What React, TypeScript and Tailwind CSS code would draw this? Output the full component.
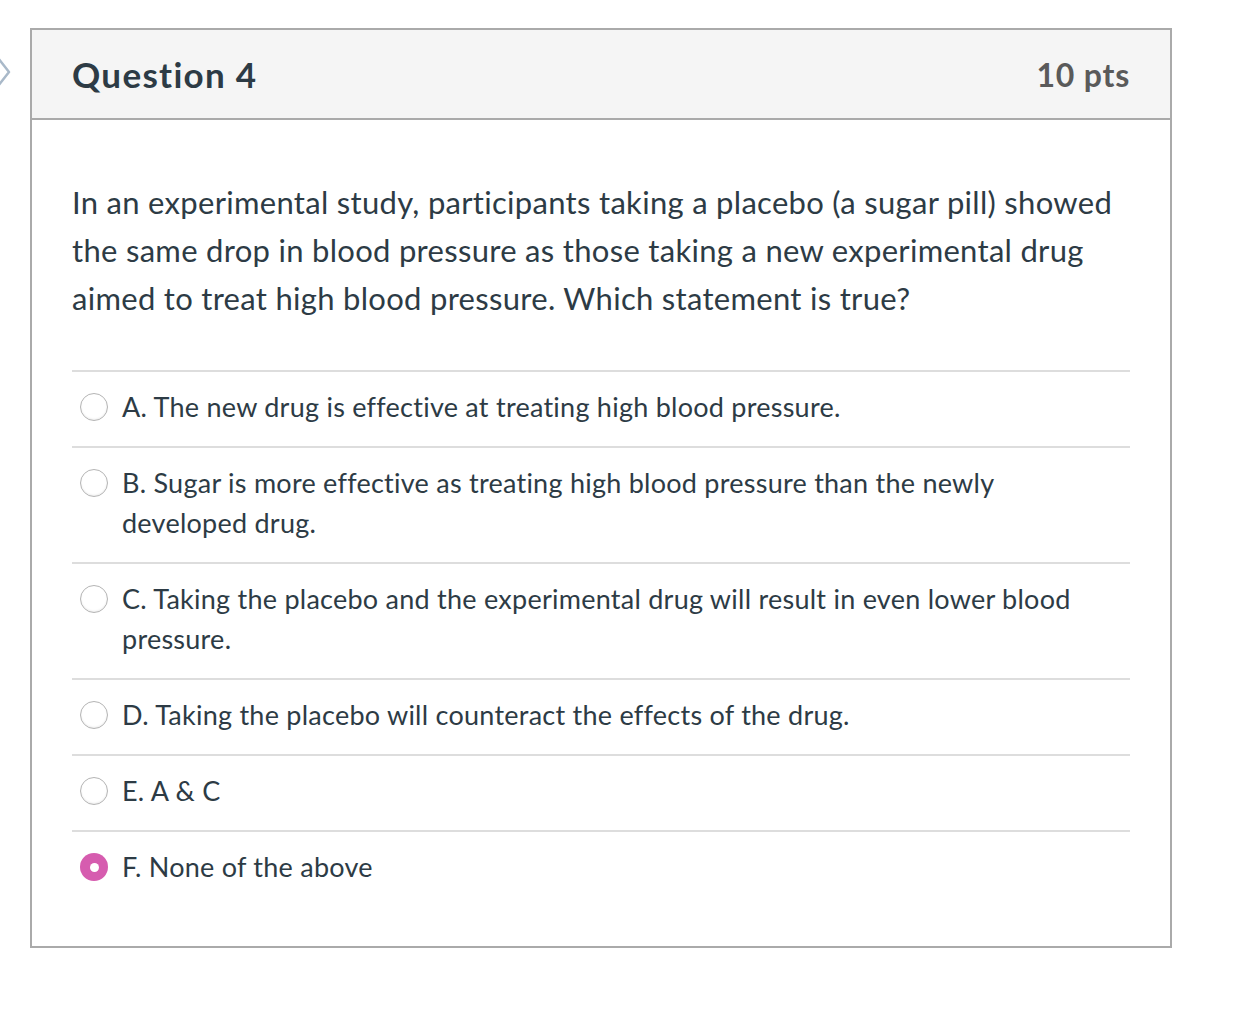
import React, { useState } from 'react';

const answers = [
  { id: 'a', text: 'A. The new drug is effective at treating high blood pressure.' },
  { id: 'b', text: 'B. Sugar is more effective as treating high blood pressure than the newly developed drug.' },
  { id: 'c', text: 'C. Taking the placebo and the experimental drug will result in even lower blood pressure.' },
  { id: 'd', text: 'D. Taking the placebo will counteract the effects of the drug.' },
  { id: 'e', text: 'E. A & C' },
  { id: 'f', text: 'F. None of the above' },
];

const App = () => {
  const [selected, setSelected] = useState('f');

  return (
    <main className="min-h-screen bg-white font-['Lato','Liberation_Sans',sans-serif] text-[#2d3b45]">
      <div className="relative pt-[28px] pl-[30px]">
        {/* collapse chevron */}
        <svg className="absolute left-[-4px] top-[56px] w-[16px] h-[32px]" viewBox="0 0 16 32" fill="none">
          <path d="M2 2 L13 16 L2 30" stroke="#a9b9c9" strokeWidth={2.5} strokeLinejoin="round" />
        </svg>

        <div className="w-[1142px] border-2 border-[#aaaaaa] bg-white">
          {/* Header */}
          <div className="h-[90px] bg-[#f5f5f5] border-b-2 border-[#aaaaaa] flex items-center justify-between px-[40px]">
            <h2 className="text-[35px] font-bold text-[#2d3b45] tracking-[1.3px]">Question 4</h2>
            <div className="text-[32px] font-bold text-[#5a5a5a] tracking-[0.8px] mt-[1px]">10 pts</div>
          </div>

          {/* Body */}
          <div className="px-[40px] pt-[58px] pb-[40px]">
            <p className="text-[31px] leading-[48px] tracking-[0.3px] pr-[10px]">
              In an experimental study, participants taking a placebo (a sugar pill) showed the same drop in blood pressure as those taking a new experimental drug aimed to treat high blood pressure. Which statement is true?
            </p>

            <div className="mt-[48px]">
              {answers.map((a) => {
                const checked = selected === a.id;
                return (
                  <label
                    key={a.id}
                    onClick={() => setSelected(a.id)}
                    className="flex items-start border-t-2 border-[#dddddd] pt-[15px] pb-[19px] cursor-pointer"
                  >
                    <span className="w-[50px] shrink-0 pl-[8px] pt-[6px]">
                      {checked ? (
                        <span className="flex items-center justify-center w-[28px] h-[28px] rounded-full bg-[#d65caf]">
                          <span className="w-[9px] h-[9px] rounded-full bg-white" />
                        </span>
                      ) : (
                        <span className="block w-[28px] h-[28px] rounded-full border-[1.5px] border-[#b4b4b4] bg-white shadow-[inset_0_-1px_2px_rgba(0,0,0,0.08)]" />
                      )}
                    </span>
                    <span className="text-[27px] leading-[40px] tracking-[0.25px] pr-[40px]">{a.text}</span>
                  </label>
                );
              })}
            </div>
          </div>
        </div>
      </div>
    </main>
  );
};

export default App;
